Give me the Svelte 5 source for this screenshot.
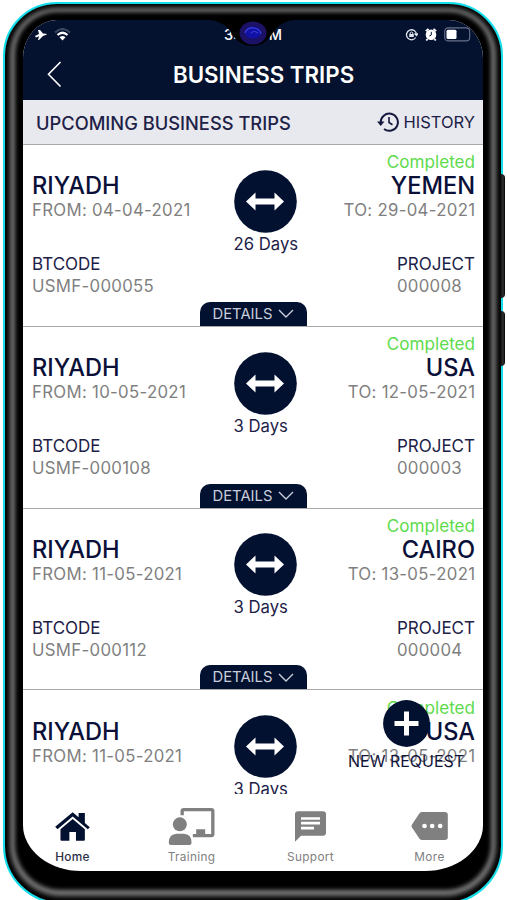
<script>
  const trips = [
    { from: 'RIYADH', to: 'YEMEN', start: '04-04-2021', end: '29-04-2021', days: 26, code: 'USMF-000055', project: '000008' },
    { from: 'RIYADH', to: 'USA', start: '10-05-2021', end: '12-05-2021', days: 3, code: 'USMF-000108', project: '000003' },
    { from: 'RIYADH', to: 'CAIRO', start: '11-05-2021', end: '13-05-2021', days: 3, code: 'USMF-000112', project: '000004' },
    { from: 'RIYADH', to: 'USA', start: '11-05-2021', end: '13-05-2021', days: 3 },
  ];

  const tabs = ['Home', 'Training', 'Support', 'More'];
  let active = $state('Home');
</script>

<div class="stage">
  <div class="side-key volume"></div>
  <div class="side-key power"></div>
  <div class="phone">
    <div class="screen">
      <header>
        <div class="status">
          <div class="status-group">
            <svg width="12" height="12" viewBox="0 0 12 12"><path d="M0 7 4 5 3 1 5 1 8 4.5 11 4.8 12 5.5 8 7 4 11 3 11 4 7.3 1 8.5Z" fill="#fff" /></svg>
            <svg width="17" height="13" viewBox="0 0 17 13" fill="none">
              <path d="M1 4.5Q8.500 -2.500 16 4.500" stroke="#3d4860" stroke-width="2" />
              <path d="M3.500 7Q8.500 2.500 13.500 7" stroke="#fff" stroke-width="2.200" />
              <path d="M5.500 9.300Q8.500 6.500 11.500 9.300L8.500 12.500Z" fill="#fff" />
            </svg>
          </div>
          <span class="time">3:38 PM</span>
          <div class="status-group right">
            <svg width="13" height="13" viewBox="0 0 13 13" fill="none" stroke="#dfe2e8">
              <path d="M10.700 9.500A5 5 0 1 1 11.500 6.500M9.500 5.500 11.500 7.500 13 5.500" stroke-width="1.300" />
              <path d="M4.200 6H8.800V9H4.200Z" fill="#dfe2e8" stroke="none" />
              <path d="M5.200 6V4.800Q6.500 3.200 7.800 4.800V6" />
            </svg>
            <svg width="12" height="13" viewBox="0 0 12 13">
              <circle cx="6" cy="6.800" r="5.300" fill="#fff" />
              <path d="M.8 3.200 3.500.8M11.200 3.200 8.500.8M2.500 11 1.300 12.500M9.500 11 10.700 12.500" stroke="#fff" stroke-width="1.800" />
              <path d="M6.300 3.800V7L4.300 8" fill="none" stroke="#041230" />
            </svg>
            <svg width="27" height="15" viewBox="0 0 27 15">
              <rect x=".7" y=".9" width="25" height="13" rx="3.500" fill="none" stroke="#69728a" stroke-width="1.100" />
              <rect x="2.500" y="2.800" width="10" height="9.200" rx="1.500" fill="#fff" />
            </svg>
          </div>
        </div>
        <div class="title-row">
          <svg width="15" height="27" viewBox="0 0 15 27"><path d="M13.500 1 1.500 13.200 13.500 25.500" fill="none" stroke="#fff" stroke-width="1.600" /></svg>
          <h1>BUSINESS TRIPS</h1>
        </div>
        <svg class="notch" width="82" height="28" viewBox="0 0 82 28">
          <path d="M0 0Q14 2 21 14Q28 26 41 26Q54 26 61 14Q68 2 82 0Z" fill="#000" />
          <ellipse cx="42" cy="13" rx="13.500" ry="11.500" fill="#1b1265" />
          <ellipse cx="42" cy="12.500" rx="8" ry="6" fill="#1211a6" />
          <path d="M34 13Q36 7 43 8Q49 9 50 14M40 13Q43 10 47 13" fill="none" stroke="#3940d8" stroke-width="1.200" />
        </svg>
      </header>

      <div class="subhead">
        <h2>UPCOMING BUSINESS TRIPS</h2>
        <button class="history">
          <svg width="22" height="20" viewBox="0 0 22 20" fill="none" stroke="#15193f">
            <path d="M3.700 10.500A8.600 8.600 0 1 1 7 17" stroke-width="2" />
            <path d="M0 9.500H7.500L3.700 14Z" fill="#15193f" stroke="none" />
            <path d="M12 5V10.500L15.500 12.700" stroke-width="1.600" />
          </svg>
          <span>HISTORY</span>
        </button>
      </div>

      <main>
        {#each trips as trip}
          <article>
            <div class="route">
              <div class="place">
                <strong>{trip.from}</strong>
                <span class="date">FROM: {trip.start}</span>
              </div>
              <div class="span">
                <svg width="63" height="63" viewBox="0 0 63 63">
                  <circle cx="31.500" cy="31.500" r="31.300" fill="#031130" />
                  <path d="M12 31.500 21.500 22.500V28.500H40.500V22.500L50 31.500 40.500 40.500V34.500H21.500V40.500Z" fill="#fff" />
                </svg>
                <span class="days">{trip.days} Days</span>
              </div>
              <div class="place end">
                <span class="state">Completed</span>
                <strong>{trip.to}</strong>
                <span class="date">TO: {trip.end}</span>
              </div>
            </div>
            {#if trip.code}
              <div class="codes">
                <div>
                  <span class="label">BTCODE</span>
                  <span class="value">{trip.code}</span>
                </div>
                <div>
                  <span class="label">PROJECT</span>
                  <span class="value">{trip.project}</span>
                </div>
              </div>
              <button class="details">
                <span>DETAILS</span>
                <svg width="16" height="9" viewBox="0 0 16 9"><path d="M1 1 8 8 15 1" fill="none" stroke="#c9ceda" stroke-width="1.400" /></svg>
              </button>
            {/if}
          </article>
        {/each}
        <button class="fab">
          <svg width="47" height="47" viewBox="0 0 47 47">
            <circle cx="23.500" cy="23.500" r="23.400" fill="#031130" />
            <path d="M23.500 11.500V35.500M11.500 23.500H35.500" stroke="#fff" stroke-width="5" />
          </svg>
          <span>NEW REQUEST</span>
        </button>
      </main>

      <nav>
        {#each tabs as tab}
          <button class="tab" class:active={active === tab} onclick={() => (active = tab)}>
            <span class="icon">
              {#if tab === 'Home'}
                <svg width="35" height="29" viewBox="165 395 105 88" fill="currentColor">
                  <path d="M218 396 236 411V398H255V428L270 441 264 447 218 409 172 447 165 440Z" />
                  <path d="M218 416 255 447V479Q255 482 252 482H228V456H208V482H184Q181 482 181 479V447Z" />
                </svg>
              {:else if tab === 'Training'}
                <svg width="47" height="37" viewBox="506 383 140 111" fill="currentColor">
                  <path d="M548 405V393Q548 388 553 388H635Q640 388 640 393V461Q640 466 635 466H580" fill="none" stroke="currentColor" stroke-width="10" />
                  <path d="M590 447H617V466H590Z" />
                  <circle cx="541" cy="432" r="21" />
                  <path d="M508 488Q507 461 532 460H553Q577 461 576 488Q576 494 570 494H514Q508 494 508 488Z" />
                </svg>
              {:else if tab === 'Support'}
                <svg width="31" height="31" viewBox="126 391 93 92">
                  <path d="M135 391H210Q219 391 219 400V456Q219 465 210 465H144L126 483V400Q126 391 135 391Z" fill="currentColor" />
                  <path d="M144 413H201M144 427H201M144 442H183" stroke="#fff" stroke-width="8" />
                </svg>
              {:else}
                <svg width="37" height="28" viewBox="475 396 110 84">
                  <path d="M508 396H576Q585 396 585 405V471Q585 480 576 480H508Q503 480 500 476L477 442Q475 438 477 434L500 400Q503 396 508 396Z" fill="currentColor" />
                  <circle cx="515" cy="438" r="7" fill="#fff" />
                  <circle cx="538" cy="438" r="7" fill="#fff" />
                  <circle cx="562" cy="438" r="7" fill="#fff" />
                </svg>
              {/if}
            </span>
            <span class="tab-label">{tab}</span>
          </button>
        {/each}
      </nav>
    </div>
  </div>
</div>

<style>
  :global(body) {
    background: #fff;
  }

  .stage {
    position: relative;
    width: 507px;
    height: 900px;
    overflow: hidden;
    box-sizing: border-box;
    padding: 2px 0 0 3px;
    font-family: Inter, 'Liberation Sans', sans-serif;
  }

  .phone {
    box-sizing: border-box;
    width: 500px;
    height: 902px;
    padding: 16px 17px 30px 18px;
    border: 2px solid #12dfeb;
    border-radius: 54px 54px 58px 58px;
    background: #000;
    box-shadow: inset 0 -1px 5px 5px #000, inset 0 -2px 4px 10px #7c7c7c;
  }

  .side-key {
    position: absolute;
    left: 500px;
    width: 5px;
    background: linear-gradient(90deg, #000, #333 60%, #000);
    border-radius: 0 4px 4px 0;
    z-index: 1;
  }

  .volume { top: 174px; height: 124px; }
  .power { top: 311px; height: 55px; }

  .screen {
    display: flex;
    flex-direction: column;
    width: 460px;
    height: 851px;
    overflow: hidden;
    border-radius: 34px 34px 58px 58px / 38px 38px 46px 46px;
    background: #fff;
  }

  button {
    padding: 0;
    border: 0;
    background: none;
    font: inherit;
    color: inherit;
    cursor: pointer;
  }

  svg { display: block; flex-shrink: 0; }

  header {
    position: relative;
    flex: none;
    height: 80px;
    background: #041230;
    color: #fff;
  }

  .status {
    display: grid;
    grid-template-columns: 1fr auto 1fr;
    align-items: center;
    height: 29px;
    padding: 0 12px;
  }

  .status-group { display: flex; align-items: center; gap: 7px; }
  .status-group.right { justify-content: flex-end; }
  .time { font-size: 14.5px; font-weight: 500; }

  .title-row {
    display: flex;
    align-items: center;
    height: 50px;
    padding-left: 24px;
  }

  h1 {
    margin: 0 0 0 111px;
    font-size: 22.3px;
    font-weight: 600;
    white-space: nowrap;
  }

  .notch {
    position: absolute;
    top: 0;
    left: 188px;
  }

  .subhead {
    flex: none;
    box-sizing: border-box;
    display: flex;
    align-items: center;
    justify-content: space-between;
    height: 45px;
    padding: 1px 8px 0 13px;
    background: #e8e9ee;
    border-bottom: 1px solid #aaa;
    color: #1d2147;
  }

  h2 {
    margin: 0;
    font-size: 18.3px;
    font-weight: 500;
    white-space: nowrap;
  }

  .history {
    display: flex;
    align-items: center;
    gap: 5px;
    margin: -2px 0 0;
    font-size: 16.5px;
  }

  main {
    position: relative;
    flex: none;
    height: 649px;
    overflow: hidden;
  }

  article {
    box-sizing: border-box;
    display: flex;
    flex-direction: column;
    height: 181.800px;
    padding: 6.4px 8px 0 9px;
    border-bottom: 1.500px solid #aaa;
    color: #1d2147;
  }

  .route {
    display: grid;
    grid-template-columns: 201.5px 80px 1fr;
    height: 103px;
  }

  .place { display: flex; flex-direction: column; padding-top: 22px; white-space: nowrap; }
  .place.end { align-items: flex-end; padding-top: 0; }

  strong {
    font-size: 23.6px;
    line-height: 26px;
    font-weight: 500;
    color: #0a1038;
  }

  .date, .value { font-size: 16.8px; line-height: 22px; letter-spacing: 0.3px; color: #7f7f7f; }
  .date { margin-right: -0.3px; }
  .state { font-size: 17.1px; line-height: 22px; color: #5edb4c; }
  .span { padding-top: 18.5px; }
  .days { display: block; font-size: 16.7px; line-height: 22px; white-space: nowrap; }

  .codes { display: flex; justify-content: space-between; }
  .codes div { display: flex; flex-direction: column; }
  .label { font-size: 17px; line-height: 21px; }

  .details {
    display: flex;
    align-items: center;
    justify-content: center;
    gap: 6px;
    width: 107px;
    height: 24px;
    margin: auto 0 0 168px;
    border-radius: 10px 10px 0 0;
    background: #031130;
    color: #c9ceda;
    font-size: 14.8px;
  }

  .fab {
    position: absolute;
    top: 555px;
    left: 325px;
    display: flex;
    flex-direction: column;
    align-items: center;
    gap: 3px;
    color: #11153c;
    font-size: 16px;
    line-height: 22px;
    white-space: nowrap;
  }

  nav {
    flex: none;
    display: flex;
    width: 476px;
    height: 77px;
    margin-left: -10px;
  }

  .tab {
    display: flex;
    flex-direction: column;
    align-items: center;
    width: 119px;
    height: 77px;
    color: #808080;
  }

  .tab.active { color: #031130; }
  .icon { display: flex; align-items: center; height: 52px; padding-top: 6px; }
  .tab-label { margin-top: -3px; font-size: 11.8px; line-height: 16px; letter-spacing: 0.35px; }
  .active .tab-label { color: #2a3048; font-weight: 500; }
</style>
